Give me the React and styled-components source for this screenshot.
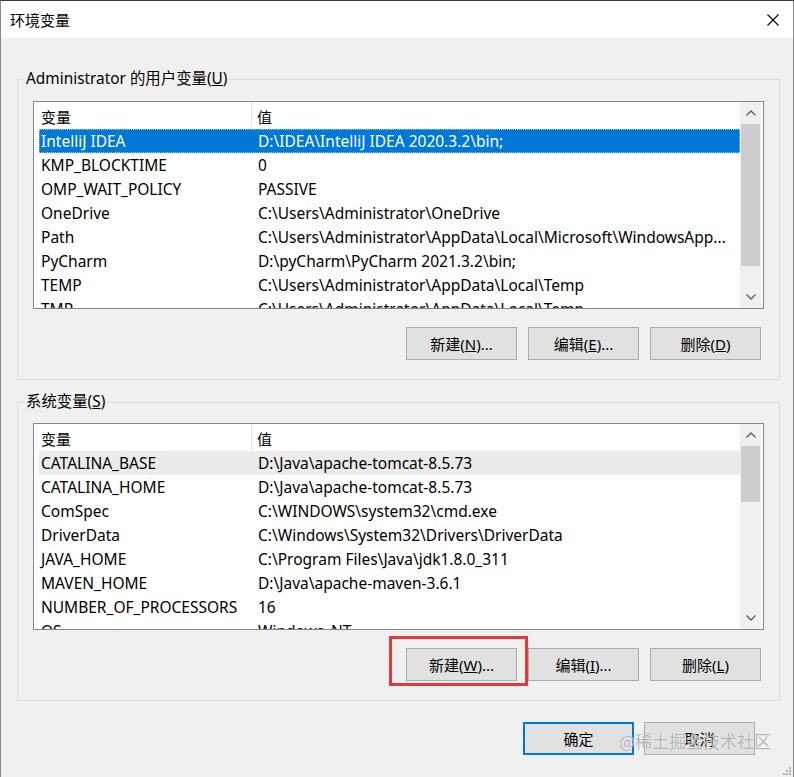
import React from "react";
import styled, { createGlobalStyle } from "styled-components";

const Global = createGlobalStyle`
  html, body { margin: 0; padding: 0; background: #2e2e2e; }
  body { font-family: "Noto Sans", "Noto Sans CJK SC", sans-serif; }
  * { box-sizing: border-box; }
`;

const Dialog = styled.div`
  position: relative;
  width: 794px;
  height: 777px;
  display: flex;
  flex-direction: column;
  background: #f0f0f0;
  border-top: 1px solid #3a3a3a;
  border-left: 1px solid #8a8a8a;
  border-right: 1px solid #8a8a8a;
  font-size: 15px;
  color: #000;
`;

const TitleBar = styled.div`
  height: 37px;
  flex: none;
  background: #fff;
  display: flex;
  align-items: center;
  padding-left: 9px;
`;

const TitleText = styled.div`
  font-size: 15px;
  line-height: 20px;
  font-family: "Noto Sans CJK SC", sans-serif;
`;

const CloseButton = styled.div`
  margin-left: auto;
  width: 40px;
  height: 37px;
  display: flex;
  align-items: center;
  justify-content: center;
`;

const Body = styled.div`
  flex: 1;
  display: flex;
  flex-direction: column;
  padding: 31px 13px 0 16px;
`;

const GroupBox = styled.fieldset`
  margin: ${(p) => p.$top || 0}px 0 0 0;
  padding: 0;
  border: 1px solid #dcdcdc;
  min-width: 0;
`;

const Legend = styled.legend`
  margin-left: 6px;
  padding: 0 2px;
  line-height: 20px;
  font-size: 15.4px;
`;

const GroupInner = styled.div`
  padding: ${(p) => p.$pt}px 15px 19px 15px;
`;

const ListBox = styled.div`
  height: ${(p) => p.$h}px;
  border: 1px solid #828790;
  background: #fff;
  display: flex;
  font-size: 15.5px;
`;

const ListMain = styled.div`
  flex: 1;
  min-width: 0;
  display: flex;
  flex-direction: column;
`;

const Header = styled.div`
  height: 27px;
  flex: none;
  display: grid;
  grid-template-columns: 218px 1fr;
  line-height: 27px;
`;

const HeaderCell = styled.div`
  padding-left: ${(p) => p.$pl}px;
  padding-top: 1px;
  border-right: ${(p) => (p.$divider ? "1px solid #e5e5e5" : "none")};
  font-family: "Noto Sans CJK SC", sans-serif;
  font-size: 15px;
`;

const Rows = styled.div`
  flex: 1;
  overflow: hidden;
  padding-left: 5px;
`;

const Row = styled.div`
  height: 24px;
  display: grid;
  grid-template-columns: 213px 1fr;
  line-height: 24px;
  white-space: nowrap;
  background: ${(p) => (p.$sel ? "#0078d7" : p.$soft ? "#ebebeb" : "transparent")};
  color: ${(p) => (p.$sel ? "#fff" : "#000")};
  outline: ${(p) => (p.$sel ? "1px dotted #9cc9ee" : "none")};
  outline-offset: -1px;
`;

const Cell = styled.div`
  padding-left: ${(p) => p.$pl}px;
  overflow: hidden;
`;

const ScrollBar = styled.div`
  width: 21px;
  margin-right: 2px;
  flex: none;
  background: #f0f0f0;
  display: flex;
  flex-direction: column;
`;

const ArrowBox = styled.div`
  height: ${(p) => p.$h}px;
  flex: none;
  display: flex;
  align-items: center;
  justify-content: center;
`;

const Track = styled.div`
  flex: 1;
  display: flex;
  flex-direction: column;
`;

const Thumb = styled.div`
  height: ${(p) => p.$h}px;
  background: #cdcdcd;
  margin: 0 1px;
`;

const ButtonRow = styled.div`
  display: flex;
  justify-content: flex-end;
  gap: 11px;
  margin-top: 18px;
  margin-right: 3px;
`;

const Button = styled.div`
  position: relative;
  width: 111px;
  height: 33px;
  border: ${(p) => (p.$primary ? "2px solid #0078d7" : "1px solid #adadad")};
  background: #e1e1e1;
  display: flex;
  align-items: center;
  justify-content: center;
  font-size: 15px;
  font-family: "Noto Sans", "Noto Sans CJK SC", sans-serif;
  color: #000;

  ${(p) =>
    p.$marked &&
    `&::after {
      content: "";
      position: absolute;
      top: -13px;
      left: -18px;
      right: -12px;
      bottom: -6px;
      border: 3px solid #e4393c;
    }`}
`;

const Footer = styled.div`
  position: relative;
  display: flex;
  justify-content: flex-end;
  gap: 10px;
  margin-top: 21px;
  margin-right: 25px;
`;

const Watermark = styled.div`
  position: absolute;
  right: -16px;
  top: 7px;
  font-size: 17px;
  line-height: 24px;
  font-family: "Noto Sans CJK SC", sans-serif;
  color: rgba(150, 150, 150, 0.7);
  text-shadow: 0 0 1px #fff;
  pointer-events: none;
  white-space: nowrap;
`;

const Grip = styled.svg`
  position: absolute;
  right: 2px;
  bottom: 2px;
`;

const Chevron = ({ up }) => (
  <svg width="10" height="6" viewBox="0 0 10 6">
    <polyline
      points={up ? "0.5,5.5 5,1 9.5,5.5" : "0.5,0.5 5,5 9.5,0.5"}
      fill="none"
      stroke="#606060"
      strokeWidth="1.3"
    />
  </svg>
);

const userVars = [
  ["IntelliJ IDEA", "D:\\IDEA\\IntelliJ IDEA 2020.3.2\\bin;"],
  ["KMP_BLOCKTIME", "0"],
  ["OMP_WAIT_POLICY", "PASSIVE"],
  ["OneDrive", "C:\\Users\\Administrator\\OneDrive"],
  ["Path", "C:\\Users\\Administrator\\AppData\\Local\\Microsoft\\WindowsApp..."],
  ["PyCharm", "D:\\pyCharm\\PyCharm 2021.3.2\\bin;"],
  ["TEMP", "C:\\Users\\Administrator\\AppData\\Local\\Temp"],
  ["TMP", "C:\\Users\\Administrator\\AppData\\Local\\Temp"],
];

const sysVars = [
  ["CATALINA_BASE", "D:\\Java\\apache-tomcat-8.5.73"],
  ["CATALINA_HOME", "D:\\Java\\apache-tomcat-8.5.73"],
  ["ComSpec", "C:\\WINDOWS\\system32\\cmd.exe"],
  ["DriverData", "C:\\Windows\\System32\\Drivers\\DriverData"],
  ["JAVA_HOME", "C:\\Program Files\\Java\\jdk1.8.0_311"],
  ["MAVEN_HOME", "D:\\Java\\apache-maven-3.6.1"],
  ["NUMBER_OF_PROCESSORS", "16"],
  ["OS", "Windows_NT"],
];

function VarList({ rows, height, thumbTop, thumbH, selected, soft }) {
  return (
    <ListBox $h={height}>
      <ListMain>
        <Header>
          <HeaderCell $pl={7} $divider>变量</HeaderCell>
          <HeaderCell $pl={5}>值</HeaderCell>
        </Header>
        <Rows>
          {rows.map(([k, v], i) => (
            <Row key={k} $sel={i === selected} $soft={i === soft}>
              <Cell $pl={2}>{k}</Cell>
              <Cell $pl={6}>{v}</Cell>
            </Row>
          ))}
        </Rows>
      </ListMain>
      <ScrollBar>
        <ArrowBox $h={thumbTop}>
          <Chevron up />
        </ArrowBox>
        <Track>
          <Thumb $h={thumbH} />
        </Track>
        <ArrowBox $h={22}>
          <Chevron />
        </ArrowBox>
      </ScrollBar>
    </ListBox>
  );
}

export default function App() {
  return (
    <>
      <Global />
      <Dialog>
        <TitleBar>
          <TitleText>环境变量</TitleText>
          <CloseButton>
            <svg width="12" height="12" viewBox="0 0 12 12">
              <path d="M0.5 0.5 L11.5 11.5 M11.5 0.5 L0.5 11.5" stroke="#000" strokeWidth="1.1" />
            </svg>
          </CloseButton>
        </TitleBar>
        <Body>
          <GroupBox>
            <Legend>
              Administrator 的用户变量(<u>U</u>)
            </Legend>
            <GroupInner $pt={12}>
              <VarList rows={userVars} height={208} thumbTop={22} thumbH={142} selected={0} soft={-1} />
              <ButtonRow>
                <Button>新建(<u>N</u>)...</Button>
                <Button>编辑(<u>E</u>)...</Button>
                <Button>删除(<u>D</u>)</Button>
              </ButtonRow>
            </GroupInner>
          </GroupBox>
          <GroupBox $top={12}>
            <Legend>
              系统变量(<u>S</u>)
            </Legend>
            <GroupInner $pt={11}>
              <VarList rows={sysVars} height={207} thumbTop={22} thumbH={56} selected={-1} soft={0} />
              <ButtonRow>
                <Button $marked>新建(<u>W</u>)...</Button>
                <Button>编辑(<u>I</u>)...</Button>
                <Button>删除(<u>L</u>)</Button>
              </ButtonRow>
            </GroupInner>
          </GroupBox>
          <Footer>
            <Button $primary>确定</Button>
            <Button>取消</Button>
            <Watermark>@稀土掘金技术社区</Watermark>
          </Footer>
        </Body>
        <Grip width="9" height="9" viewBox="0 0 9 9">
          {[
            [7, 1], [7, 4], [4, 4], [7, 7], [4, 7], [1, 7],
          ].map(([x, y]) => (
            <rect key={`${x}-${y}`} x={x} y={y} width="2" height="2" fill="#b0b0b0" />
          ))}
        </Grip>
      </Dialog>
    </>
  );
}
